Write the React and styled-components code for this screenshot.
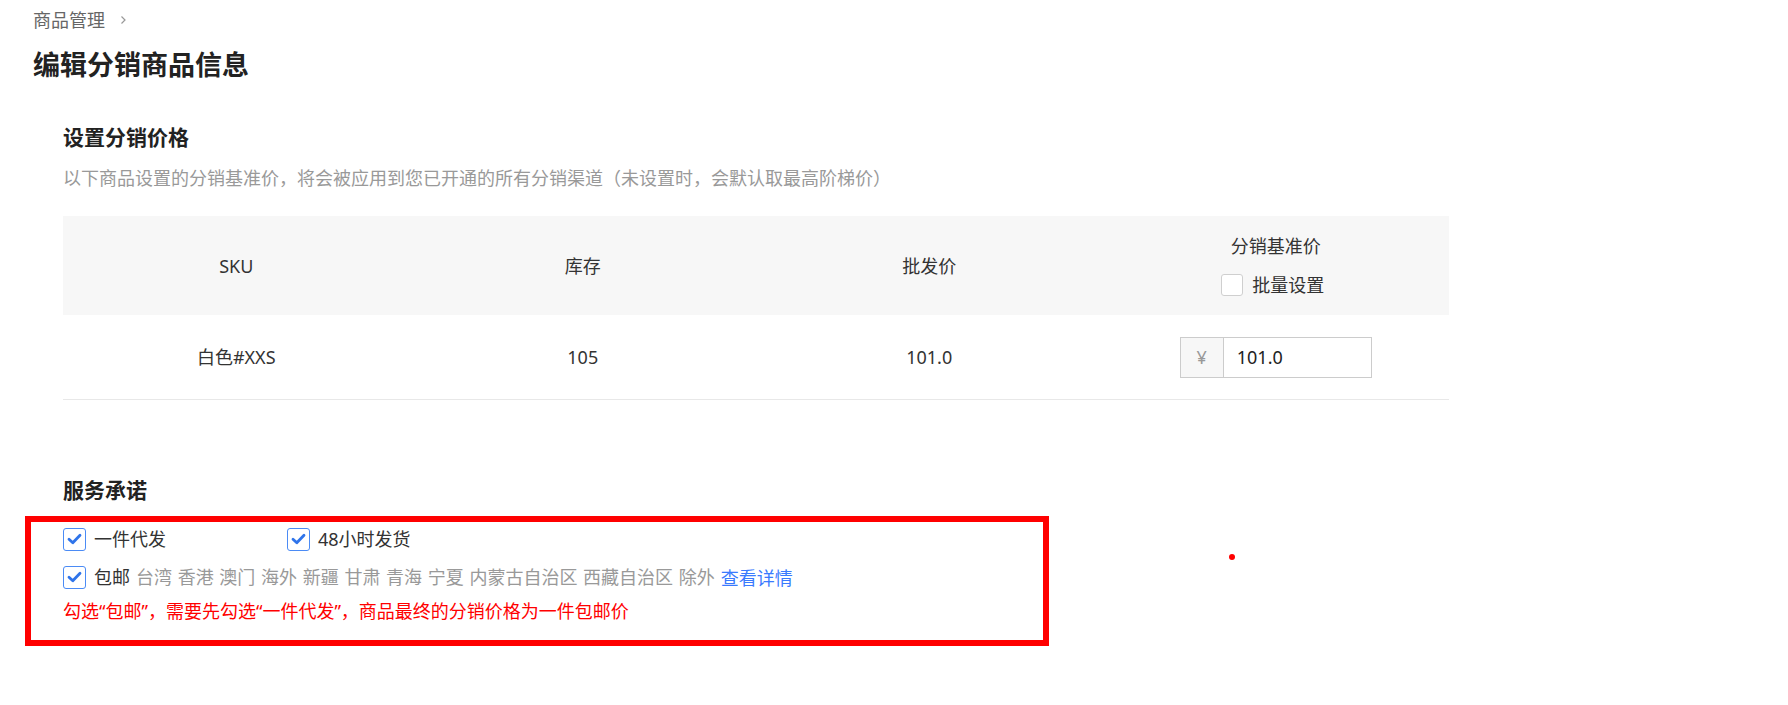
import React from "react"
import styled, { createGlobalStyle } from "styled-components"

const GlobalStyle = createGlobalStyle`
  body {
    margin: 0;
    background: #fff;
    font-family: "Noto Sans", "Noto Sans CJK SC", sans-serif;
    color: #333;
  }
`

const Page = styled.div`
  position: relative;
  padding: 8px 0 40px 33px;
`

const Breadcrumb = styled.div`
  display: flex;
  align-items: center;
  gap: 15px;
  height: 24px;
  font-size: 18px;
  line-height: 24px;
  color: #666;
`

const Title = styled.h1`
  margin: 15px 0 0;
  font-size: 27px;
  line-height: 36px;
  font-weight: 700;
  color: #222;
`

const Content = styled.div`
  padding-left: 30px;
`

const SectionTitle = styled.h2`
  margin: ${p => p.$top}px 0 0;
  font-size: 21px;
  line-height: 28px;
  font-weight: 700;
  color: #222;
`

const Desc = styled.p`
  margin: 15px 0 0;
  font-size: 18px;
  line-height: 24px;
  color: #999;
`

const Table = styled.div`
  width: 1386px;
  margin-top: 26px;
`

const Row = styled.div`
  display: grid;
  grid-template-columns: repeat(4, 1fr);
  height: ${p => p.$h}px;
  background: ${p => (p.$head ? "#f7f7f7" : "#fff")};
  border-bottom: ${p => (p.$head ? "none" : "1px solid #e8e8e8")};
`

const Cell = styled.div`
  display: flex;
  flex-direction: column;
  align-items: center;
  justify-content: center;
  gap: 15px;
  font-size: 18px;
  line-height: 24px;
  color: #333;
`

const BatchSet = styled.div`
  margin-right: 6px;
`

const CheckLabel = styled.label`
  display: flex;
  align-items: center;
  gap: ${p => p.$gap || 8}px;
  width: ${p => (p.$w ? p.$w + "px" : "auto")};
  font-size: 18px;
  line-height: 24px;
  color: #333;
`

const Box = styled.span`
  width: ${p => p.$size}px;
  height: ${p => p.$size}px;
  box-sizing: border-box;
  flex: none;
  border: 1px solid ${p => (p.$on ? "#4b8bf5" : "#cfcfcf")};
  border-radius: 3px;
  background: #fff;
  display: flex;
  align-items: center;
  justify-content: center;
`

const PriceInput = styled.div`
  display: flex;
  width: 192px;
  height: 41px;
  box-sizing: border-box;
  border: 1px solid #ccc;
`

const Prefix = styled.span`
  width: 42px;
  flex: none;
  display: flex;
  align-items: center;
  justify-content: center;
  background: #f7f7f7;
  border-right: 1px solid #ccc;
  color: #999;
  font-size: 18px;
`

const Value = styled.input`
  border: 0;
  outline: none;
  padding: 0 13px;
  min-width: 0;
  font-size: 18px;
  font-family: inherit;
  color: #222;
  background: transparent;
`

const PromiseBox = styled.div`
  width: 1024px;
  height: 130px;
  box-sizing: border-box;
  margin: 12px 0 0 -38px;
  border: 6px solid #f00;
  padding: 5px 0 0 32px;
`

const CheckRow = styled.div`
  display: flex;
  align-items: center;
  height: 24px;
  margin-top: ${p => p.$top || 0}px;
`

const Regions = styled.span`
  margin-left: 6px;
  color: #999;
  font-size: 18px;
  line-height: 24px;
  word-spacing: 1px;
`

const Link = styled.a`
  margin-left: 6px;
  color: #3a7afe;
  font-size: 18px;
  text-decoration: none;
  cursor: pointer;
`

const Warning = styled.p`
  margin: 10px 0 0;
  font-size: 18px;
  line-height: 24px;
  color: #f00;
`

const Dot = styled.span`
  position: absolute;
  left: 1229px;
  top: 554px;
  width: 6px;
  height: 6px;
  border-radius: 50%;
  background: #f00;
`

const Chevron = () => (
  <svg width="7" height="10" viewBox="0 0 7 10">
    <path d="M1.5 1.5 L5 5 L1.5 8.5" fill="none" stroke="#999" strokeWidth="1.2" />
  </svg>
)

const Check = ({ on, size = 23, children, w, gap }) => (
  <CheckLabel $w={w} $gap={gap}>
    <Box $on={on} $size={size}>
      {on && (
        <svg width="15" height="12" viewBox="0 0 15 12">
          <path d="M2 6.2 L5.8 9.8 L13 2.2" fill="none" stroke="#2f74ea" strokeWidth="2.8" strokeLinecap="round" strokeLinejoin="round" />
        </svg>
      )}
    </Box>
    {children}
  </CheckLabel>
)

const regions = ["台湾", "香港", "澳门", "海外", "新疆", "甘肃", "青海", "宁夏", "内蒙古自治区", "西藏自治区", "除外"]

export default function App() {
  return (
    <Page>
      <GlobalStyle />
      <Breadcrumb>
        商品管理
        <Chevron />
      </Breadcrumb>
      <Title>编辑分销商品信息</Title>

      <Content>
        <SectionTitle $top={40}>设置分销价格</SectionTitle>
        <Desc>以下商品设置的分销基准价，将会被应用到您已开通的所有分销渠道（未设置时，会默认取最高阶梯价）</Desc>

        <Table>
          <Row $head $h={99}>
            <Cell>SKU</Cell>
            <Cell>库存</Cell>
            <Cell>批发价</Cell>
            <Cell>
              <span>分销基准价</span>
              <BatchSet>
                <Check size={22} gap={9}>批量设置</Check>
              </BatchSet>
            </Cell>
          </Row>
          <Row $h={84}>
            <Cell>白色#XXS</Cell>
            <Cell>105</Cell>
            <Cell>101.0</Cell>
            <Cell>
              <PriceInput>
                <Prefix>¥</Prefix>
                <Value defaultValue="101.0" />
              </PriceInput>
            </Cell>
          </Row>
        </Table>

        <SectionTitle $top={76}>服务承诺</SectionTitle>
        <PromiseBox>
          <CheckRow>
            <Check on w={224}>一件代发</Check>
            <Check on>48小时发货</Check>
          </CheckRow>
          <CheckRow $top={14}>
            <Check on>包邮</Check>
            <Regions>{regions.join(" ")}</Regions>
            <Link>查看详情</Link>
          </CheckRow>
          <Warning>勾选“包邮”，需要先勾选“一件代发”，商品最终的分销价格为一件包邮价</Warning>
        </PromiseBox>
      </Content>
      <Dot />
    </Page>
  )
}
